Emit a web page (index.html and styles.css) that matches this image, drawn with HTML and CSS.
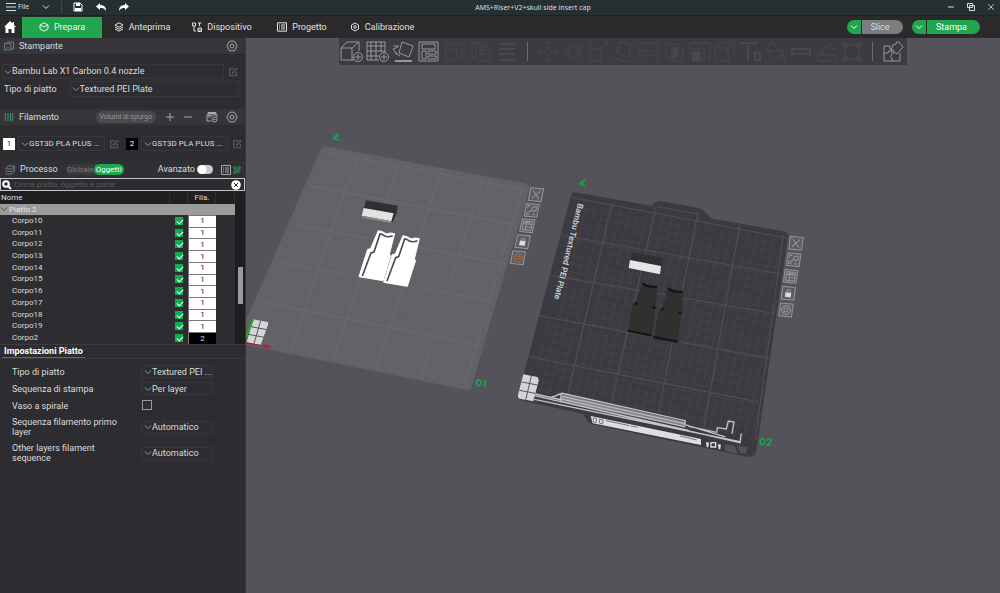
FILE: index.html
```
<!DOCTYPE html>
<html lang="it">
<head>
<meta charset="utf-8">
<title>AMS+Riser+V2+skull side insert cap</title>
<link rel="stylesheet" href="styles.css">
</head>
<body>
<svg class="defs" aria-hidden="true">
  <symbol id="chev" viewBox="0 0 8 8"><path d="M1 2.5 4 5.5 7 2.5"/></symbol>
  <symbol id="gear" viewBox="0 0 12 12"><path d="M3.5 1.2h5L11.2 6 8.500 10.800h-5L.8 6z"/><circle cx="6" cy="6" r="2"/></symbol>
  <symbol id="edit" viewBox="0 0 12 12"><path d="M7 2H2v8.500h8V6M5 7.500l.5-2L10 1.500l1 1L7 7z"/></symbol>
  <symbol id="cube" viewBox="0 0 24 24"><path d="M2 8h13v13H2zM2 8l6-6h13l-6 6M21 2v10M15 21l2-2"/></symbol>
  <symbol id="close" viewBox="0 0 10 10"><path d="M1.500 1.500l7 7M8.500 1.500l-7 7"/></symbol>
</svg>
<div class="app">
  <header class="titlebar">
    <div class="menu">
      <button class="file"><svg class="i10" viewBox="0 0 10 10"><path d="M0 1.500h10M0 5h10M0 8.500h10"/></svg>File</button>
      <button aria-label="Menu"><svg class="i8"><use href="#chev"/></svg></button>
      <span class="vline"></span>
      <button aria-label="Salva"><svg class="i10 white" viewBox="0 0 10 10"><path d="M1 1h6l2 2v6H1z"/><path class="solid" d="M3 1h4v3H3zM2 6h6v3H2z"/></svg></button>
      <button aria-label="Annulla"><svg class="i10 white" viewBox="0 0 10 10"><path class="solid" d="M0 4.500 4 1v2c4 0 6 2 6 6C8.500 6.500 7 6 4 6v2z"/></svg></button>
      <button aria-label="Ripeti"><svg class="i10 white" viewBox="0 0 10 10"><path class="solid" d="M10 4.500 6 1v2C2 3 0 5 0 9c1.500-2.500 3-3 6-3v2z"/></svg></button>
    </div>
    <div class="title">AMS+Riser+V2+skull side insert cap</div>
    <div class="window">
      <button aria-label="Riduci"><svg class="i8" viewBox="0 0 8 8"><path d="M1 4h6"/></svg></button>
      <button aria-label="Ripristina"><svg class="i8" viewBox="0 0 8 8"><path d="M.5.5h5v4h-5zM2.500 2.500h5v5h-5z"/></svg></button>
      <button aria-label="Chiudi"><svg class="i8"><use href="#close"/></svg></button>
    </div>
  </header>

  <nav class="tabs">
    <button class="home" aria-label="Home"><svg class="i12" viewBox="0 0 12 12"><path class="solid" d="M6 0 0 6h1.500v6h3V8h3v4h3V6H12L10 4V1H8.500v1.500z"/></svg></button>
    <button class="tab active"><svg class="i10" viewBox="0 0 10 10"><path d="M5 .8 9 3v4L5 9.200 1 7V3zM1 3l4 2 4-2"/></svg>Prepara</button>
    <button class="tab"><svg class="i10" viewBox="0 0 10 10"><path d="M5 .8 9 3 5 5.200 1 3zM1 5l4 2.200L9 5M1 7l4 2.200L9 7"/></svg>Anteprima</button>
    <button class="tab"><svg class="i10" viewBox="0 0 10 10"><path d="M.5 1h3v3h-3zM6 1h3.500M7.500 1v3M2 4v5h2M6 6h3.500v3.500H6zM6 8h3.500"/></svg>Dispositivo</button>
    <button class="tab"><svg class="i10" viewBox="0 0 10 10"><path d="M.5.8h9v8.400h-9zM2 3h1M4 3h4M2 5h1M4 5h4M2 7h1M4 7h4"/></svg>Progetto</button>
    <button class="tab"><svg class="i10" viewBox="0 0 10 10"><path d="M5 1l3.500 2v4L5 9 1.500 7V3z"/><circle cx="5" cy="5" r="1.300"/></svg>Calibrazione</button>
    <div class="actions">
      <div class="split"><button class="drop" aria-label="Opzioni slice"><svg class="i8"><use href="#chev"/></svg></button><button class="main slice">Slice</button></div>
      <div class="split"><button class="drop" aria-label="Opzioni stampa"><svg class="i8"><use href="#chev"/></svg></button><button class="main print">Stampa</button></div>
    </div>
  </nav>

  <div class="body">
    <aside class="sidebar">
      <section>
        <h2 class="head"><svg class="i10" viewBox="0 0 10 10"><path d="M3 1h6.500v7H7M.5 2.500H7v6.500H.5z"/><path class="green" d="M2 7h3.500"/></svg><span class="name">Stampante</span><button aria-label="Impostazioni stampante"><svg class="i12"><use href="#gear"/></svg></button></h2>
        <div class="printer">
          <div class="line">
            <div class="sel grow"><svg class="i8"><use href="#chev"/></svg><select aria-label="Stampante"><option>Bambu Lab X1 Carbon 0.4 nozzle</option></select></div>
            <button class="dim" aria-label="Modifica stampante"><svg class="i10"><use href="#edit"/></svg></button>
          </div>
          <div class="line plate">
            <label for="bed">Tipo di piatto</label>
            <div class="sel grow"><svg class="i8"><use href="#chev"/></svg><select id="bed"><option>Textured PEI Plate</option></select></div>
          </div>
        </div>
      </section>
      <section>
        <h2 class="head"><svg class="i10" viewBox="0 0 10 10"><path d="M2 1Q0 5 2 9M8 1q2 4 0 8"/><path class="green" d="M4 1v8M6.500 1v8"/></svg><span class="name">Filamento</span>
          <button class="flush">Volumi di spurgo</button>
          <button aria-label="Aggiungi"><svg class="i8" viewBox="0 0 8 8"><path d="M4 0v8M0 4h8"/></svg></button>
          <button aria-label="Rimuovi"><svg class="i8" viewBox="0 0 8 8"><path d="M0 4h8"/></svg></button>
          <button class="ams" aria-label="Sincronizza AMS"><svg class="i12" viewBox="0 0 12 12"><path d="M2 4V1.500h8V4M1 4h10v2M1 4v6h4M3 4v3M5 4v2M2 2.500h8"/><circle cx="8.500" cy="8.500" r="2.500"/><path d="M7.500 8.500h2"/></svg></button>
          <button aria-label="Impostazioni filamento"><svg class="i12"><use href="#gear"/></svg></button>
        </h2>
        <div class="filaments">
          <div class="fil"><span class="chip one">1</span><div class="sel grow"><svg class="i8"><use href="#chev"/></svg><select aria-label="Filamento 1"><option>GST3D PLA PLUS ...</option></select></div><button class="dim" aria-label="Modifica filamento 1"><svg class="i10"><use href="#edit"/></svg></button></div>
          <div class="fil"><span class="chip two">2</span><div class="sel grow"><svg class="i8"><use href="#chev"/></svg><select aria-label="Filamento 2"><option>GST3D PLA PLUS ...</option></select></div><button class="dim" aria-label="Modifica filamento 2"><svg class="i10"><use href="#edit"/></svg></button></div>
        </div>
      </section>
      <section>
        <h2 class="head process"><svg class="i10" viewBox="0 0 10 10"><path d="M3 1h6.500L7 4H.5zM9.500 1v5L7 9H.5"/><path class="green" d="M.5 6.500H7l2.500-3"/></svg><span class="name">Processo</span>
          <span class="scope"><button>Globale</button><button class="on">Oggetti</button></span>
          <label class="adv" for="adv">Avanzato</label><input class="switch" id="adv" type="checkbox" role="switch">
          <button class="listbtn" aria-label="Elenco"><svg class="i10" viewBox="0 0 10 10"><path d="M.5.5h9v9h-9zM2 3h1M4 3h4M2 5h1M4 5h4M2 7h1M4 7h4"/></svg></button>
          <button aria-label="Confronta"><svg class="i8 green" viewBox="0 0 8 8"><circle cx="1.800" cy="1.800" r="1.200"/><circle cx="1.800" cy="6.200" r="1.200"/><circle cx="6.200" cy="1.800" r="1.200"/><path d="M2.500 3l1.500 1.500L5.500 3M4 4.500 2.500 5.500M5 5v2.500M5 5h2.500"/></svg></button>
        </h2>
        <div class="search">
          <svg class="i10 white bold" viewBox="0 0 10 10"><circle cx="4" cy="4" r="2.800"/><path d="M6 6l3 3"/></svg>
          <input type="text" aria-label="Cerca" placeholder="Cerca piatto, oggetto e parte">
          <button aria-label="Cancella"><svg class="i10" viewBox="0 0 10 10"><circle class="disc" cx="5" cy="5" r="4.800"/><path class="cross" d="M3 3l4 4M7 3 3 7"/></svg></button>
        </div>
        <div class="tree">
          <table>
            <thead><tr><th>Nome</th><th class="c-check"></th><th class="c-fil">Fila.</th><th class="c-end"></th></tr></thead>
            <tbody>
              <tr class="group"><td colspan="4"><svg class="i8"><use href="#chev"/></svg>Piatto 2</td></tr>
              <tr><td>Corpo10</td><td><input type="checkbox" checked aria-label="Corpo10"></td><td class="f1">1</td><td></td></tr>
              <tr><td>Corpo11</td><td><input type="checkbox" checked aria-label="Corpo11"></td><td class="f1">1</td><td></td></tr>
              <tr><td>Corpo12</td><td><input type="checkbox" checked aria-label="Corpo12"></td><td class="f1">1</td><td></td></tr>
              <tr><td>Corpo13</td><td><input type="checkbox" checked aria-label="Corpo13"></td><td class="f1">1</td><td></td></tr>
              <tr><td>Corpo14</td><td><input type="checkbox" checked aria-label="Corpo14"></td><td class="f1">1</td><td></td></tr>
              <tr><td>Corpo15</td><td><input type="checkbox" checked aria-label="Corpo15"></td><td class="f1">1</td><td></td></tr>
              <tr><td>Corpo16</td><td><input type="checkbox" checked aria-label="Corpo16"></td><td class="f1">1</td><td></td></tr>
              <tr><td>Corpo17</td><td><input type="checkbox" checked aria-label="Corpo17"></td><td class="f1">1</td><td></td></tr>
              <tr><td>Corpo18</td><td><input type="checkbox" checked aria-label="Corpo18"></td><td class="f1">1</td><td></td></tr>
              <tr><td>Corpo19</td><td><input type="checkbox" checked aria-label="Corpo19"></td><td class="f1">1</td><td></td></tr>
              <tr><td>Corpo2</td><td><input type="checkbox" checked aria-label="Corpo2"></td><td class="f2">2</td><td></td></tr>
            </tbody>
          </table>
          <div class="scroll"><span class="thumb"></span></div>
        </div>
      </section>
      <section>
        <div class="subhead"><h3>Impostazioni Piatto</h3></div>
        <div class="params">
          <label for="p1">Tipo di piatto</label><div class="sel"><svg class="i8"><use href="#chev"/></svg><select id="p1"><option>Textured PEI ...</option></select></div>
          <label for="p2">Sequenza di stampa</label><div class="sel"><svg class="i8"><use href="#chev"/></svg><select id="p2"><option>Per layer</option></select></div>
          <label for="p3">Vaso a spirale</label><input class="box" id="p3" type="checkbox">
          <label class="two-line" for="p4">Sequenza filamento primo layer</label><div class="sel"><svg class="i8"><use href="#chev"/></svg><select id="p4"><option>Automatico</option></select></div>
          <label class="two-line" for="p5">Other layers filament sequence</label><div class="sel"><svg class="i8"><use href="#chev"/></svg><select id="p5"><option>Automatico</option></select></div>
        </div>
      </section>
    </aside>

    <main class="viewport">
      <svg class="scene" viewBox="246 38 754 555" preserveAspectRatio="xMidYMid slice" role="img" aria-label="Piatti di stampa">
        <defs>
          <pattern id="fine1" width="1" height="1" patternUnits="userSpaceOnUse" patternTransform="matrix(25 4.600 -8 23.600 235 65)"><path d="M0 0H1M0 0V1" stroke="#6a6b70" stroke-width=".05"/></pattern>
          <pattern id="fine2" width="1" height="1" patternUnits="userSpaceOnUse" patternTransform="matrix(25.600 4.600 -5.800 23.600 210 82)"><path d="M0 0H1M0 0V1" stroke="#4b4a51" stroke-width=".1"/></pattern>
          <g id="bx"><path class="pbox" d="M-19-19h38v38h-38z"/></g>
          <g id="pi-close"><use href="#bx"/><path d="M-11-12 11 12M11-12-11 12"/></g>
          <g id="pi-orient"><use href="#bx"/><path d="M-13-5V-13h8M-13 4v9h9M2-10l11-2v10l-6 5-8-4zM-9 8l8-8M4 12h9"/></g>
          <g id="pi-arrange"><use href="#bx"/><path d="M-13-13h26v26h-26zM-13-5h26M-4-5v18M-4 4h17M-9-9h17"/></g>
          <g id="pi-lock"><use href="#bx"/><path class="lockbody" d="M-7-1H7v11H-7z"/><path d="M-5-2v-5q5-7 10 0v5"/></g>
          <g id="pi-set"><use href="#bx"/><path d="M-7-12H7l7 12-7 12H-7l-7-12z"/><circle r="6"/></g>
        </defs>

        <g transform="translate(246 125) scale(.3333)">
          <path class="p1" d="M240 64 840 176Q853 180 850 192L676 788Q673 798 662 795L0 660V585L222 78Q228 62 240 64z"/>
          <path fill="url(#fine1)" d="M240 72 835 185 665 785 0 655V585z"/>
          <path class="p1line" d="M195 183 800 299M150 300l630 117M98 410l650 120M50 530l650 132M335 95 130 680M458 120 260 705M583 145 390 732M710 165 525 755M228 78l616 117M830 190 655 785"/>
          <path fill="#303031" d="M360 226 455 242 452 264 440 292 347 274z"/>
          <path fill="#e2e2e2" d="M353 249 443 265 436 289 347 272z"/>
          <path fill="#8e8e8e" d="M347 272l89 17-1 5-85-16z"/>
          <path fill="#fff" stroke="#fff" stroke-width="3" d="M397 317l12 3q12 11 25 4l12 2-16 62 4 3-23 76-72-12 26-82 9-2z"/>
          <path fill="#fff" stroke="#fff" stroke-width="3" d="M471 332l12 3q12 11 25 4l12 2-15 62 4 3-25 78-71-12 26-83 9-2z"/>
          <path class="part" d="M349 453l26-69 9-3 18-54 6 1q16 12 32 4M423 468l26-70 9-3 18-53 6 1q16 12 32 4"/>
          <path fill="#d5d5d7" d="M22 583 65 591Q68 594 66 600L44 660 2 652z"/>
          <path d="M44 587 24 656M15 605l47 9M7 628l47 9" stroke="#55565a" stroke-width="3"/>
          <path d="M22 583 0 635" stroke="#17b31f" stroke-width="5"/>
          <path d="M0 654l66 11M60 660l12 6-14 3z" stroke="#b3202b" stroke-width="4"/>
          <path d="M277 27 263 36q-5 8 17 8M263 43l15-13" class="axis"/>
          <g class="picons">
            <use href="#pi-close" transform="matrix(1 .1 -.2 1 870 209)"/>
            <use href="#pi-orient" transform="matrix(1 .1 -.2 1 857 256)"/>
            <use href="#pi-arrange" transform="matrix(1 .1 -.2 1 844 302)"/>
            <use href="#pi-lock" transform="matrix(1 .1 -.2 1 830 350)"/>
            <g class="warn" transform="matrix(1 .1 -.2 1 816 398)"><use href="#bx" class="frame"/><path d="M-7-12H7l7 12-7 12H-7l-7-12z"/><circle r="6"/></g>
          </g>
        </g>
        <text class="num" x="475" y="386" transform="rotate(8 475 386)">01</text>

        <g transform="translate(500 170) scale(.3333)">
          <path class="p2" d="M225 67 455 107Q465 93 485 94L598 114Q610 117 616 128L636 146 852 184Q866 188 864 200L769 844Q764 862 745 861L275 763Q262 757 250 732L60 690Q53 684 56 670L212 80Q215 67 225 67z"/>
          <path fill="url(#fine2)" d="M213 84 860 205 770 815 75 670z"/>
          <path class="p2line" d="M213 82 860 204M183 195 842 312M150 315 825 431M115 437 806 566M85 560 776 696M335 100 205 670M467 110 335 700M592 135 475 730M720 160 610 780M850 195 766 810M470 110l125 22v22"/>
          <path fill="#303030" d="M398 248 490 264 482 292 390 275z"/>
          <path fill="#e5e5e5" d="M390 270 483 288 480 313 386 294z"/>
          <path fill="#30302f" d="M427 340q22 18 46 8l-17 150-73-14 15-84 10-4zM504 354q22 18 46 8l-15 156-74-13 15-83 10-4z"/>
          <path d="M427 340q20 14 44 10M504 355q20 14 44 10M383 482l72 15M460 501l72 14M404 400l9 2M458 412l9 2M483 417l8 2M536 427l8 3" stroke="#151515" stroke-width="7"/>
          <path class="corner" d="M70 613 112 621Q117 624 116 632L100 694 58 686Q52 682 54 674z"/>
          <path d="M94 618 77 690M65 636l47 9M58 661l47 9" stroke="#55545a" stroke-width="3"/>
          <path d="M103 677 720 818 724 790M103 688l620 128M150 684l36-14 370 82-2 12 122 37M184 672l-4 25M186 679l368 82M184 687l372 84M184 695l382 86M566 769l84 18 2-14 27 4 6-24 17 3-6 36M106 672l80 18" class="wipe"/>
          <path class="band" d="M184 672 556 755v15L184 696z"/>
          <path fill="#dededf" d="M272 738 603 807 603 825 278 760z"/>
          <path d="M280 744l10 2-1 12-9-2zM298 748l11 2-1 12-9-2zM318 752l70 15M540 798l50 12M392 768l20 4" stroke="#77777b" stroke-width="3"/>
          <path fill="#ddd" d="M618 816l9 2-2 14h-5zM654 822l9 2-2 14h-5z"/>
          <path d="M633 818h14v13h-14z" stroke="#ddd" stroke-width="4"/>
          <path fill="#535258" d="M674 822l28 6 14 24-42-10zM710 827l32 5-5 20-15-3z"/>
          <path d="M257 30 243 37q-5 8 12 9M240 45l14-12" class="axis"/>
          <g class="picons">
            <use href="#pi-close" transform="matrix(1 .1 -.14 1 888 220)"/>
            <use href="#pi-orient" transform="matrix(1 .1 -.14 1 881 269)"/>
            <use href="#pi-arrange" transform="matrix(1 .1 -.14 1 872 319)"/>
            <use href="#pi-lock" transform="matrix(1 .1 -.14 1 865 370)"/>
            <use href="#pi-set" transform="matrix(1 .1 -.14 1 858 420)"/>
          </g>
        </g>
        <text class="platename" x="578" y="203" transform="rotate(104 578 203)">Bambu Textured PEI Plate</text>
        <text class="num" x="759" y="445" transform="rotate(4 759 445)">02</text>
      </svg>

      <div class="toolbar">
        <div class="tools">
          <button aria-label="Aggiungi"><svg viewBox="0 0 24 24"><path d="M2 8h11v12H2zM2 8l6-6h12l-7 6M20 2v9M13 20h2"/><circle cx="19" cy="17" r="4.500"/><path d="M16 17h6M19 14v6"/></svg></button>
          <button aria-label="Aggiungi piatto"><svg viewBox="0 0 24 24"><path d="M2 2h18v10M2 2v18h12M2 6h18M2 11h18M2 16h12M6 2v18M11 2v18M16 2v10"/><circle cx="19" cy="17" r="4.500"/><path d="M16 17h6M19 14v6"/></svg></button>
          <button aria-label="Orientamento"><svg viewBox="0 0 24 24"><path d="M11 2l11 4-4 11-10-4zM2 6h6M2 9l4 5M2 9l5-2M9 16l-5-3"/><path class="thick" d="M4 21h17"/></svg></button>
          <button aria-label="Disponi"><svg viewBox="0 0 24 24"><path d="M2 2h19v19H2zM5 4h13v5H5zM5 11h4v8H5zM11 11h8v3h-8zM11 16h8v3h-8z"/></svg></button>
          <button class="off" aria-label="Dividi in oggetti"><svg viewBox="0 0 24 24"><path d="M3 5h11l4 4v12H3zM7 9h7v9H7M6 3h12l3 4v12"/></svg></button>
          <button class="off" aria-label="Dividi in parti"><svg viewBox="0 0 24 24"><path d="M3 3h13v3M3 3v15h3M7 6h10l4 4v11H7zM11 18v-8h5v4h-5"/></svg></button>
          <button class="off" aria-label="Altezza layer"><svg viewBox="0 0 24 24"><path class="thick" d="M4 4h16M4 9h16M4 14h16M4 20h16"/></svg></button>
        </div>
        <span class="vbar"></span>
        <div class="tools spread">
          <button class="off" aria-label="Sposta"><svg viewBox="0 0 24 24"><path d="M12 1v8M12 14v8M1 12h8M15 12h8M9 4l3-3 3 3M9 19l3 3 3-3M4 9l-3 3 3 3M20 9l3 3-3 3"/></svg></button>
          <button class="off" aria-label="Ruota"><svg viewBox="0 0 24 24"><circle cx="12" cy="12" r="8"/><path d="M12 6l5 3v6l-5 3-5-3V9zM17 3l4 4"/></svg></button>
          <button class="off" aria-label="Scala"><svg viewBox="0 0 24 24"><path d="M3 9h11v12H3zM3 7V3h4M15 8l6-6M17 2h4v4"/></svg></button>
          <button class="off" aria-label="Posiziona su faccia"><svg viewBox="0 0 24 24"><path d="M8 2l10 2v11l-5 2-8-4zM2 15q0 5 8 6h10"/></svg></button>
          <button class="off" aria-label="Taglia"><svg viewBox="0 0 24 24"><path d="M3 2v20M21 2v20M3 3h18M3 11h18M6 15h12"/></svg></button>
          <button class="off" aria-label="Booleano"><svg viewBox="0 0 24 24"><path d="M3 4h12v13H3zM9 8h11v13H9z"/><path class="solid" d="M10 8h5v9h-5z"/></svg></button>
          <button class="off" aria-label="Supporti"><svg viewBox="0 0 24 24"><path d="M2 3h20v18M2 3v6h14v12"/><path class="solid" d="M4 11h9v10H4z"/></svg></button>
          <button class="off" aria-label="Giunzione"><svg><use href="#cube"/></svg></button>
          <button class="off" aria-label="Testo"><svg viewBox="0 0 24 24"><path class="thick" d="M2 3h17M9 3v18M16 13h5v7h-5z"/></svg></button>
          <button class="off" aria-label="Colora"><svg viewBox="0 0 24 24"><path d="M7 2l12 10-7 8-9-9zM3 11h16M19 14l3 7h-5z"/></svg></button>
          <button class="off" aria-label="Misura"><svg viewBox="0 0 24 24"><path class="thick" d="M3 9h18v5H3z"/></svg></button>
          <button class="off" aria-label="Assembla"><svg viewBox="0 0 24 24"><path d="M3 12v9h18v-6H3M7 9l8-5 5 6M7 15v-6"/></svg></button>
          <button class="off" aria-label="Tieni insieme"><svg viewBox="0 0 24 24"><path d="M5 5h14v14H5zM3 3h4v4H3zM17 3h4v4h-4zM3 17h4v4H3zM17 17h4v4h-4z"/></svg></button>
        </div>
        <span class="vbar"></span>
        <button aria-label="Vista assemblaggio"><svg viewBox="0 0 24 24"><path d="M9 6H3v15h16v-8M3 13h4q0-3 3-2l1 2h2M11 21v-3q-3-1 0-4M9 6q-1 4 3 4"/><path d="M12 5l3-1q0-3 3-2l4 5-6 7-3-2q0-3-3-2z"/></svg></button>
      </div>
    </main>
  </div>
</div>
</body>
</html>
```
FILE: styles.css
```
* { box-sizing: border-box; }
body { margin: 0; background: #2d2d31; color: #dcdcde; font: 9px/11px Roboto, "Open Sans", sans-serif; }
button, select, input { font: inherit; color: inherit; margin: 0; padding: 0; border: 0; background: none; }
button { display: flex; align-items: center; justify-content: center; }
svg { fill: none; stroke: currentColor; flex: none; display: block; }
.defs { position: absolute; width: 0; height: 0; }
.i8 { width: 8px; height: 8px; }
.i10 { width: 10px; height: 10px; }
.i12 { width: 12px; height: 12px; }
.white { color: #fff; }
.green { color: #21a65a; stroke: #21a65a; }
.solid { fill: currentColor; stroke: none; }
.bold { stroke-width: 2; }

.app { display: flex; flex-direction: column; min-height: 100vh; }

.titlebar { display: flex; align-items: center; height: 16px; padding: 0 5px 1px 6px; background: #263032; border-bottom: 1px solid #1c2224; font-size: 7px; line-height: 9px; }
.menu { display: flex; align-items: center; gap: 13px; }
.file { gap: 2px; }
.vline { width: 1px; height: 12px; margin: 0 -2px; background: #3f494b; }
.title { flex: 1; padding-right: 10px; text-align: center; font-family: "Noto Sans", sans-serif; }
.window { display: flex; gap: 12px; }

.tabs { display: flex; align-items: center; height: 22px; background: #2a2a2b; }
.home { width: 22px; height: 21px; padding-right: 2px; color: #fff; }
.tab { width: 80px; height: 21px; gap: 5px; color: #e0e0e0; }
.tab.active { background: #21a650; color: #e6f6ea; }
.actions { display: flex; gap: 9px; margin-left: auto; padding-right: 20px; }
.split { display: flex; gap: 1px; height: 14px; color: #fff; }
.split button { background: #21a650; }
.drop { width: 14px; border-radius: 7px 0 0 7px; }
.main { border-radius: 0 7px 7px 0; }
.split .slice { width: 41px; background: #7d7d80; padding-right: 5px; color: #d8d8d8; }
.split .print { width: 53px; padding-right: 4px; }

.body { display: flex; flex: 1; }
.sidebar { width: 246px; flex: none; background: #2d2d31; border-right: 1px solid #38383c; }
.head { display: flex; align-items: center; height: 16px; margin: 0; padding: 0 7px 0 4px; font-size: 9px; font-weight: 400; background: #35353a; }
.head > svg { color: #77777c; }
.head .name { margin: 0 auto 0 5px; }
.head button { color: #a8a8ac; margin-left: 10px; }
.printer { display: flex; flex-direction: column; gap: 2px; padding: 10px 6px 12px 2px; }
.line { display: flex; align-items: center; gap: 3px; }
.line.plate { padding-left: 2px; gap: 13px; }
.plate .sel { height: 16px; }
.sel { display: flex; align-items: center; height: 15px; border: 1px solid #37373b; min-width: 0; padding-left: 1px; }
.sel svg { color: #98989c; }
.sel select { appearance: none; flex: 1; min-width: 0; height: 13px; outline: 0; }
.grow { flex: 1; }
.dim { color: #68686d; width: 12px; }
.head .flush { height: 12px; padding: 0 4px; border-radius: 6px; background: #4a4a4f; color: #97979c; font-size: 7px; margin-left: 0; }
.head .ams { margin-left: 14px; }
.head .ams + button { margin-left: 8px; }
.filaments { display: grid; grid-template-columns: repeat(2, minmax(0, 1fr)); gap: 6px; padding: 11px 2px 10px 3px; font-size: 8px; }
.fil { display: flex; align-items: center; gap: 3px; min-width: 0; }
.fil .sel { padding-left: 2px; }
.chip { width: 12px; height: 12px; flex: none; text-align: center; line-height: 12px; }
.one { background: #fff; color: #222; }
.two { background: #000; color: #fff; }

.head.process { padding: 0 4px 0 5px; height: 17px; background: #303034; }
.process .name { margin-right: 8px; }
.scope { display: flex; height: 11px; border-radius: 6px; background: #3a3a3e; padding-left: 1px; font-size: 8px; }
.head .scope button { margin: 0; color: #78787c; }
.head .scope .on { background: #21a650; color: #fff; border-radius: 6px; padding: 0 2px; }
.adv { margin-left: auto; }
.switch { appearance: none; width: 16px; height: 9px; border-radius: 5px; margin-left: 2px; background: radial-gradient(circle at 5px 50%, #fff 4px, #cdcdcd 5px); }
.head .listbtn { margin-left: 8px; }
.head .listbtn + button { margin-left: 2px; }

.search { display: flex; align-items: center; height: 13px; border: 1px solid #c6c6c8; padding: 0 3px 0 1px; font-size: 8px; gap: 2px; }
.search input { flex: 1; min-width: 0; height: 11px; outline: 0; }
.search input::placeholder { color: #55555a; }
.disc { fill: #fff; stroke: none; }
.cross { stroke: #222; }

.tree { display: flex; background: #1e1e20; border-bottom: 1px solid #3c3c40; }
table { flex: 1; height: 153px; border-collapse: separate; border-spacing: 0; table-layout: fixed; font-size: 8px; line-height: 10px; background: #2d2d31; }
th, td { padding: 0; text-align: left; font-weight: 400; }
thead { background: #202022; }
th { height: 13px; border-right: 1px solid #303033; padding-left: 1px; }
.c-check { width: 18px; }
.c-fil { width: 28px; text-align: center; }
.c-end { width: 19px; }
td:first-child { padding-left: 12px; }
.group td:first-child { height: 11px; background: #9b9b9c; color: #e4e4e4; padding-left: 0; }
.group svg { display: inline-block; vertical-align: middle; color: #4c4c4e; margin-right: 1px; }
.tree input { appearance: none; display: block; width: 8px; height: 8px; margin: 0 auto 0 5px; background: #14ab50; }
.tree input::before { content: ""; display: block; width: 5px; height: 3px; margin: 0 2px; border: solid #e9fff0; border-width: 0 0 1px 1px; transform: translateY(2px) rotate(-45deg); }
tbody .f1, tbody .f2 { text-align: center; color: #222; background: #fff; border: solid #77777a; border-width: 1px 0 0 1px; }
tbody .f2 { background: #000; color: #ddd; }
.scroll { width: 10px; padding: 76px 2px 0 3px; }
.thumb { display: block; height: 37px; background: #9a9a9c; }

.subhead { display: flex; border-bottom: 1px solid #3a3a3e; padding-left: 2px; }
h3 { margin: 0; padding: 1px 2px 0; font-size: 9px; line-height: 11px; font-weight: 700; color: #fff; border-bottom: 1px solid #1d8f4b; }
.params { display: grid; grid-template-columns: 125px 72px; column-gap: 4px; row-gap: 4px; align-items: center; padding: 6px 12px; line-height: 10px; }
.params .sel { height: 13px; padding-left: 2px; }
.params .sel select { height: 11px; }
.two-line { padding: 1px 20px 1px 0; }
.box { appearance: none; width: 10px; height: 10px; border: 1px solid #9a9a9e; margin: 1px 0 2px 1px; }

.viewport { position: relative; flex: 1; min-width: 0; background: #545359; }
.scene { position: absolute; inset: 0; width: 100%; height: 100%; stroke: none; }
.p1 { fill: #616266; }
.p1line { stroke: #6e6f74; stroke-width: 2; }
.part { stroke: #4b4b4d; stroke-width: 5; }
.p2 { fill: #3b3a40; }
.p2line { stroke: #515058; stroke-width: 3; }
.corner { fill: #d5d5d7; }
.wipe { stroke: #c4c4c7; stroke-width: 4; }
.band { fill: #b0b0b3; fill-opacity: .6; }
.axis { stroke: #15a04c; stroke-width: 5; }
.picons { stroke: #96969b; stroke-width: 3; }
.pbox { fill: #5d5c62; }
.lockbody { fill: #dcdcde; stroke: #dcdcde; }
.warn { stroke: #b5642c; }
.frame { stroke: #96969b; }
.num { fill: #12a84d; font: 700 10px Inter, sans-serif; }
.platename { fill: #d0d0d3; font: 600 8px Inter, sans-serif; }

.toolbar { position: absolute; top: 0; left: 50%; transform: translateX(-50%); display: flex; align-items: center; width: 568px; height: 27px; padding: 0 2px 0 0; background: #3b3c42; color: #96989c; }
.tools { display: flex; gap: 2px; }
.tools.spread { flex: 1; gap: 0; justify-content: space-between; }
.toolbar svg { width: 24px; height: 24px; }
.toolbar .off { color: #48494f; }
.vbar { width: 1px; height: 19px; margin: 0 8px; background: #6a6b70; }
.thick { stroke-width: 2; }
```
